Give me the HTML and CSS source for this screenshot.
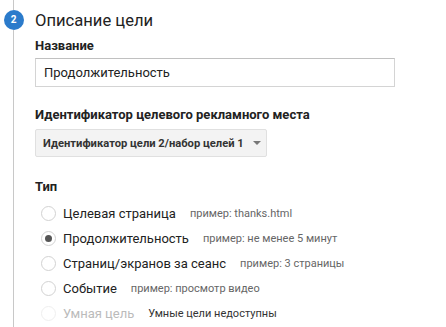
FILE: index.html
```html
<!DOCTYPE html>
<html lang="ru">
<head>
<meta charset="utf-8">
<link rel="stylesheet" href="styles.css">
</head>
<body>
<div class="step">
  <div class="rail">
    <div class="rail-top"></div>
    <div class="badge">2</div>
    <div class="rail-line"></div>
  </div>
  <div class="content">
    <h1 class="title">Описание цели</h1>
    <div class="label">Название</div>
    <div class="input">Продолжительность</div>
    <div class="label label-id">Идентификатор целевого рекламного места</div>
    <div class="select">Идентификатор цели 2/набор целей 1 <span class="caret"></span></div>
    <div class="label label-type">Тип</div>
    <ul class="radios">
      <li class="radio"><span class="dot"></span><span class="name">Целевая страница</span><span class="hint">пример: thanks.html</span></li>
      <li class="radio checked"><span class="dot"></span><span class="name">Продолжительность</span><span class="hint">пример: не менее 5 минут</span></li>
      <li class="radio"><span class="dot"></span><span class="name">Страниц/экранов за сеанс</span><span class="hint">пример: 3 страницы</span></li>
      <li class="radio"><span class="dot"></span><span class="name">Событие</span><span class="hint">пример: просмотр видео</span></li>
      <li class="radio disabled"><span class="dot"></span><span class="name">Умная цель</span><span class="hint dark">Умные цели недоступны</span></li>
    </ul>
  </div>
</div>
</body>
</html>
```
FILE: styles.css
```css
html, body {
  margin: 0;
  padding: 0;
  background: #fff;
  font-family: Roboto, "Liberation Sans", Arial, sans-serif;
  color: #222;
  overflow: hidden;
}
.step {
  display: flex;
  height: 327px;
}
.rail {
  width: 27px;
  display: flex;
  flex-direction: column;
  align-items: center;
}
.rail-top {
  width: 1px;
  height: 10px;
  background: #c8c8c8;
}
.badge {
  width: 20px;
  height: 20px;
  border-radius: 50%;
  background: #2b7bcb;
  color: #fff;
  font-size: 10px;
  font-weight: 700;
  line-height: 20px;
  text-align: center;
}
.rail-line {
  width: 1px;
  flex: 1;
  background: #c8c8c8;
}
.content {
  padding-left: 8px;
  flex: 1;
}
.title {
  margin: 10px 0 0;
  font-size: 16.6px;
  font-weight: 400;
  line-height: 22px;
  color: #222;
}
.label {
  font-size: 13px;
  font-weight: 700;
  line-height: 16px;
  margin-top: 6px;
  color: #222;
}
.input {
  margin-top: 4px;
  width: 350px;
  height: 27px;
  border: 1px solid #d4d4d4;
  border-top-color: #c0c0c0;
  font-size: 13px;
  line-height: 27px;
  padding-left: 8px;
  color: #222;
}
.label-id {
  margin-top: 20px;
}
.select {
  margin-top: 6px;
  display: flex;
  width: fit-content;
  align-items: center;
  height: 26px;
  padding: 0 5px 0 7px;
  background: #f3f3f3;
  border: 1px solid #e0e0e0;
  border-radius: 2px;
  font-size: 11.2px;
  font-weight: 700;
  color: #333;
}
.caret {
  display: inline-block;
  width: 0;
  height: 0;
  margin-left: 9px;
  border-left: 4px solid transparent;
  border-right: 4px solid transparent;
  border-top: 4px solid #777;
}
.label-type {
  margin-top: 22px;
}
.radios {
  list-style: none;
  margin: 6px 0 0;
  padding: 0 0 0 6px;
}
.radio {
  display: flex;
  align-items: center;
  height: 25px;
}
.dot {
  width: 15px;
  height: 15px;
  border: 1px solid #d2d2d2;
  border-radius: 50%;
  box-sizing: border-box;
  margin-right: 7px;
  display: flex;
  align-items: center;
  justify-content: center;
  flex: none;
}
.checked .dot::after {
  content: "";
  width: 7px;
  height: 7px;
  border-radius: 50%;
  background: #555;
}
.name {
  font-size: 13px;
  color: #222;
}
.hint {
  font-size: 11px;
  color: #666;
  margin-left: 14px;
}
.disabled .dot {
  border-color: #efefef;
}
.disabled .name {
  color: #bbb;
}
.hint.dark {
  color: #333;
}
```
